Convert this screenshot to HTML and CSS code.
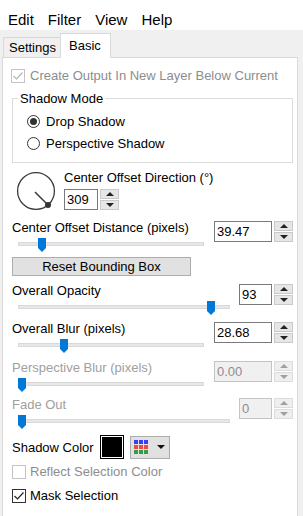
FILE: index.html
```html
<!DOCTYPE html>
<html lang="en">
<head>
  <meta charset="UTF-8" />
  <title>Drop Shadow</title>
  <link rel="stylesheet" href="styles.css">
</head>
<body>
  <div class="menubar">
    <span>Edit</span><span>Filter</span><span>View</span><span>Help</span>
  </div>

  <div class="tabs">
    <div class="tab">Settings</div>
    <div class="tab active">Basic</div>
  </div>

  <div class="panel">
    <div class="check disabled first">
      <span class="box"><svg width="12" height="12" viewBox="0 0 12 12"><polyline points="1.5,6 4.5,9 10.5,2.5" fill="none" stroke="#b5b5b5" stroke-width="1.2"/></svg></span>
      Create Output In New Layer Below Current
    </div>

    <fieldset class="group">
      <legend>Shadow Mode</legend>
      <div class="radio on"><span class="dot"></span>Drop Shadow</div>
      <div class="radio"><span class="dot"></span>Perspective Shadow</div>
    </fieldset>

    <div class="dial-row">
      <svg class="dial" width="40" height="40" viewBox="0 0 40 40">
        <circle cx="20" cy="20" r="18.4" fill="none" stroke="#3a3a3a" stroke-width="1.3"/>
        <line x1="19" y1="21" x2="32" y2="34" stroke="#3a3a3a" stroke-width="1.5"/>
        <circle cx="32" cy="34" r="3" fill="#333"/>
      </svg>
      <div class="dial-side">
        <div class="label">Center Offset Direction (°)</div>
        <div class="spin">
          <div class="spin-val w-dir">309</div>
          <div class="spin-btns"><span class="up"></span><span class="down"></span></div>
        </div>
      </div>
    </div>

    <div class="srow">
      <div class="scol">
        <div class="label">Center Offset Distance (pixels)</div>
        <div class="slider">
          <div class="track short"></div>
          <svg class="thumb" style="left:26px" width="8" height="14" viewBox="0 0 8 14"><path d="M0 0H8V10L4 14L0 10Z" fill="#0078d7"/></svg>
        </div>
      </div>
      <div class="spin">
        <div class="spin-val w-long">39.47</div>
        <div class="spin-btns"><span class="up"></span><span class="down"></span></div>
      </div>
    </div>

    <button class="reset">Reset Bounding Box</button>

    <div class="srow r-opacity">
      <div class="scol">
        <div class="label">Overall Opacity</div>
        <div class="slider">
          <div class="track long"></div>
          <svg class="thumb" style="left:195px" width="8" height="14" viewBox="0 0 8 14"><path d="M0 0H8V10L4 14L0 10Z" fill="#0078d7"/></svg>
        </div>
      </div>
      <div class="spin">
        <div class="spin-val w-short">93</div>
        <div class="spin-btns"><span class="up"></span><span class="down"></span></div>
      </div>
    </div>

    <div class="srow r-blur">
      <div class="scol">
        <div class="label">Overall Blur (pixels)</div>
        <div class="slider">
          <div class="track short"></div>
          <svg class="thumb" style="left:48px" width="8" height="14" viewBox="0 0 8 14"><path d="M0 0H8V10L4 14L0 10Z" fill="#0078d7"/></svg>
        </div>
      </div>
      <div class="spin">
        <div class="spin-val w-long">28.68</div>
        <div class="spin-btns"><span class="up"></span><span class="down"></span></div>
      </div>
    </div>

    <div class="srow r-persp dis">
      <div class="scol">
        <div class="label">Perspective Blur (pixels)</div>
        <div class="slider">
          <div class="track short"></div>
          <svg class="thumb" style="left:6px" width="8" height="14" viewBox="0 0 8 14"><path d="M0 0H8V10L4 14L0 10Z" fill="#0078d7"/></svg>
        </div>
      </div>
      <div class="spin">
        <div class="spin-val w-long">0.00</div>
        <div class="spin-btns"><span class="up"></span><span class="down"></span></div>
      </div>
    </div>

    <div class="srow r-fade dis">
      <div class="scol">
        <div class="label">Fade Out</div>
        <div class="slider">
          <div class="track long"></div>
          <svg class="thumb" style="left:6px" width="8" height="14" viewBox="0 0 8 14"><path d="M0 0H8V10L4 14L0 10Z" fill="#0078d7"/></svg>
        </div>
      </div>
      <div class="spin">
        <div class="spin-val w-short">0</div>
        <div class="spin-btns"><span class="up"></span><span class="down"></span></div>
      </div>
    </div>

    <div class="color-row">
      <span>Shadow Color</span>
      <div class="swatch"><div class="swatch-fill"></div></div>
      <div class="colorbtn">
        <div class="palette">
          <i class="b"></i><i class="b"></i><i class="b"></i>
          <i class="r"></i><i class="r"></i><i class="r"></i>
          <i class="g"></i><i class="g"></i><i class="g"></i>
        </div>
        <span class="caret"></span>
      </div>
    </div>

    <div class="check disabled reflect">
      <span class="box"></span>
      Reflect Selection Color
    </div>

    <div class="check mask">
      <span class="box"><svg width="12" height="12" viewBox="0 0 12 12"><polyline points="1.5,6 4.5,9 10.5,2.5" fill="none" stroke="#222" stroke-width="1.2"/></svg></span>
      Mask Selection
    </div>
  </div>
</body>
</html>
```

FILE: styles.css
```css
body {
  margin: 0;
  width: 303px;
  height: 516px;
  overflow: hidden;
  font-family: "Liberation Sans", Arial, sans-serif;
  font-size: 13px;
  color: #000;
  background: #f0f0f0;
  display: flex;
  flex-direction: column;
}

/* menu */
.menubar {
  height: 30px;
  flex-shrink: 0;
  box-sizing: border-box;
  padding: 10px 0 0 8px;
  background: #fff;
  display: flex;
  gap: 14px;
  font-size: 15px;
  line-height: 20px;
}

/* tabs */
.tabs {
  height: 27px;
  flex-shrink: 0;
  display: flex;
  align-items: flex-end;
  padding-left: 3px;
}
.tab {
  border: 1px solid #d9d9d9;
  border-bottom: 0;
  padding: 0 4px 0 5px;
  line-height: 19px;
  background: #f0f0f0;
}
.tab.active {
  background: #fff;
  padding: 2px 9px 3px 8px;
  margin-left: -1px;
  margin-bottom: -1px;
  position: relative;
  z-index: 1;
}

.panel {
  flex: 1;
  margin: 0 5px 0 2px;
  border: 1px solid #d9d9d9;
  border-bottom: 0;
  background: #fff;
  padding: 0 4px 0 9px;
  display: flex;
  flex-direction: column;
}

/* checkboxes */
.check {
  display: flex;
  align-items: center;
  gap: 4px;
  height: 16px;
  line-height: 16px;
}
.check .box {
  width: 14px;
  height: 14px;
  box-sizing: border-box;
  border: 1px solid #333;
  background: #fff;
  display: flex;
  align-items: center;
  justify-content: center;
}
.check.disabled { color: #8d8d8d; }
.check.disabled .box { border-color: #c4c4c4; }
.check.first { margin: 10px 0 0 -1px; gap: 5px; }
.check.reflect { margin-top: 5px; }
.check.mask { margin-top: 8px; }

/* shadow mode group */
.group {
  margin: 7px 0 0 0;
  padding: 4px 0 8px 0;
  border: 1px solid #dcdcdc;
  min-width: 0;
}
.group legend {
  margin-left: 5px;
  padding: 0 2px;
  line-height: 15px;
}
.radio {
  display: flex;
  align-items: center;
  gap: 6px;
  height: 22px;
  padding-left: 14px;
}
.radio .dot {
  width: 13px;
  height: 13px;
  box-sizing: border-box;
  border: 1px solid #333;
  border-radius: 50%;
  display: flex;
  align-items: center;
  justify-content: center;
}
.radio.on .dot::after {
  content: "";
  width: 7px;
  height: 7px;
  border-radius: 50%;
  background: #333;
}

/* direction dial */
.dial-row {
  display: flex;
  gap: 8px;
  margin-top: 7px;
}
.dial { margin: 1px 0 0 4px; }
.dial-side .spin { margin-top: 3px; }

.label { line-height: 16px; }

/* spin boxes */
.spin {
  display: flex;
  gap: 2px;
  height: 21px;
  align-self: flex-start;
}
.spin-val {
  box-sizing: border-box;
  height: 21px;
  border: 1px solid #7a7a7a;
  background: #fff;
  padding-left: 2px;
  line-height: 19px;
}
.w-dir { width: 34px; }
.w-short { width: 33px; }
.w-long { width: 58px; }
.spin-btns {
  width: 19px;
  display: flex;
  flex-direction: column;
  gap: 1px;
}
.spin-btns span {
  flex: 1;
  background: #e6e6e6;
  border: 1px solid #c9c9c9;
  display: flex;
  align-items: center;
  justify-content: center;
}
.spin-btns .up::after,
.spin-btns .down::after {
  content: "";
  border-left: 4px solid transparent;
  border-right: 4px solid transparent;
}
.spin-btns .up::after { border-bottom: 4px solid #222; }
.spin-btns .down::after { border-top: 4px solid #222; }

/* slider rows */
.srow {
  display: flex;
  justify-content: space-between;
  margin-top: 9px;
}
.srow .spin { margin-top: 1px; }
.r-opacity { margin-top: 7px; }
.r-blur { margin-top: 6px; }
.r-persp { margin-top: 7px; }
.r-fade { margin-top: 5px; }

.slider {
  position: relative;
  height: 16px;
  box-sizing: border-box;
  padding: 6px 0 0 6px;
}
.track {
  height: 4px;
  box-sizing: border-box;
  background: #e7e7e7;
  border: 1px solid #d9d9d9;
}
.track.short { width: 186px; }
.track.long { width: 212px; }
.thumb {
  position: absolute;
  top: 2px;
}

.dis .label { color: #a0a0a0; }
.dis .spin-val {
  background: #f0f0f0;
  border-color: #c4c4c4;
  color: #8d8d8d;
}
.dis .spin-btns span { background: #efefef; border-color: #dcdcdc; }
.dis .spin-btns .up::after { border-bottom-color: #a0a0a0; }
.dis .spin-btns .down::after { border-top-color: #a0a0a0; }

.reset {
  margin-top: 5px;
  width: 179px;
  height: 19px;
  padding: 0;
  font: inherit;
  color: #000;
  background: #e1e1e1;
  border: 1px solid #adadad;
}

/* shadow colour */
.color-row {
  display: flex;
  align-items: center;
  height: 24px;
  margin-top: 6px;
}
.swatch {
  margin-left: 6px;
  width: 24px;
  height: 24px;
  box-sizing: border-box;
  border: 1px solid #000;
  padding: 1px;
  background: #fff;
}
.swatch-fill {
  width: 100%;
  height: 100%;
  background: #000;
}
.colorbtn {
  margin-left: 6px;
  width: 40px;
  height: 23px;
  box-sizing: border-box;
  background: #e1e1e1;
  border: 1px solid #adadad;
  display: flex;
  align-items: center;
  padding-left: 3px;
}
.palette {
  display: grid;
  grid-template-columns: repeat(3, 4px);
  grid-auto-rows: 4px;
  gap: 1px;
}
.palette .b { background: #3c3cf5; }
.palette .r { background: #f04848; }
.palette .g { background: #30a040; }
.caret {
  margin-left: 9px;
  border-left: 4px solid transparent;
  border-right: 4px solid transparent;
  border-top: 4px solid #111;
}
```
